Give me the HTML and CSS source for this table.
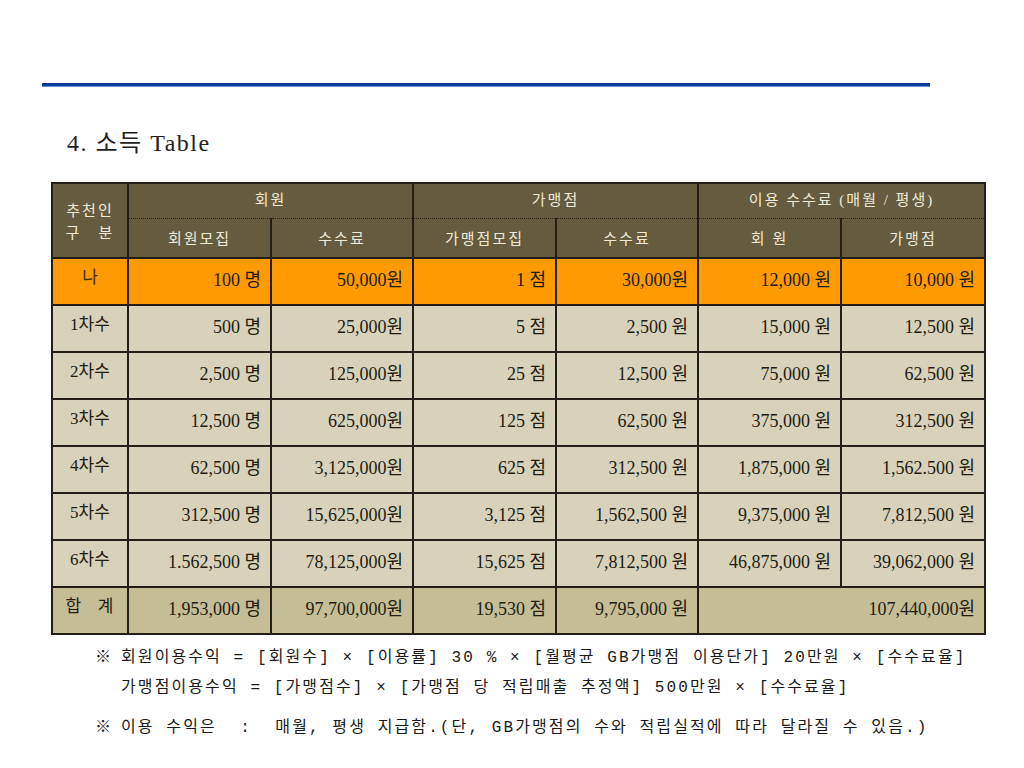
FILE: index.html
```html
<!DOCTYPE html>
<html lang="ko">
<head>
<meta charset="utf-8">
<link rel="stylesheet" href="styles.css">
</head>
<body>
<div class="page">
  <div class="rule"></div>
  <h1 class="title">4. 소득 Table</h1>
  <table class="income">
    <colgroup>
      <col class="c0"><col class="c1"><col class="c2"><col class="c3"><col class="c4"><col class="c5"><col class="c6">
    </colgroup>
    <thead>
      <tr class="h1">
        <th rowspan="2" class="who">추천인<br>구&nbsp;&nbsp;&nbsp;분</th>
        <th colspan="2" class="grp">회원</th>
        <th colspan="2" class="grp">가맹점</th>
        <th colspan="2" class="grp">이용 수수료 (매월 / 평생)</th>
      </tr>
      <tr class="h2">
        <th class="dot">회원모집</th>
        <th>수수료</th>
        <th class="dot">가맹점모집</th>
        <th>수수료</th>
        <th>회 원</th>
        <th>가맹점</th>
      </tr>
    </thead>
    <tbody>
      <tr class="me">
        <td class="lbl">나</td>
        <td class="dot">100 명</td><td>50,000원</td>
        <td class="dot">1 점</td><td>30,000원</td>
        <td>12,000 원</td><td>10,000 원</td>
      </tr>
      <tr>
        <td class="lbl">1차수</td>
        <td class="dot">500 명</td><td>25,000원</td>
        <td class="dot">5 점</td><td>2,500 원</td>
        <td>15,000 원</td><td>12,500 원</td>
      </tr>
      <tr>
        <td class="lbl">2차수</td>
        <td class="dot">2,500 명</td><td>125,000원</td>
        <td class="dot">25 점</td><td>12,500 원</td>
        <td>75,000 원</td><td>62,500 원</td>
      </tr>
      <tr>
        <td class="lbl">3차수</td>
        <td class="dot">12,500 명</td><td>625,000원</td>
        <td class="dot">125 점</td><td>62,500 원</td>
        <td>375,000 원</td><td>312,500 원</td>
      </tr>
      <tr>
        <td class="lbl">4차수</td>
        <td class="dot">62,500 명</td><td>3,125,000원</td>
        <td class="dot">625 점</td><td>312,500 원</td>
        <td>1,875,000 원</td><td>1,562.500 원</td>
      </tr>
      <tr>
        <td class="lbl">5차수</td>
        <td class="dot">312,500 명</td><td>15,625,000원</td>
        <td class="dot">3,125 점</td><td>1,562,500 원</td>
        <td>9,375,000 원</td><td>7,812,500 원</td>
      </tr>
      <tr>
        <td class="lbl">6차수</td>
        <td class="dot">1.562,500 명</td><td>78,125,000원</td>
        <td class="dot">15,625 점</td><td>7,812,500 원</td>
        <td>46,875,000 원</td><td>39,062,000 원</td>
      </tr>
      <tr class="total">
        <td class="lbl">합&nbsp;&nbsp;&nbsp;계</td>
        <td class="dot">1,953,000 명</td><td>97,700,000원</td>
        <td class="dot">19,530 점</td><td>9,795,000 원</td>
        <td colspan="2">107,440,000원</td>
      </tr>
    </tbody>
  </table>
  <div class="notes">
    <p class="note"><span class="mark">※</span>회원이용수익 = [회원수] × [이용률] 30 % × [월평균 GB가맹점 이용단가] 20만원 × [수수료율]</p>
    <p class="note cont">가맹점이용수익 = [가맹점수] × [가맹점 당 적립매출 추정액] 500만원 × [수수료율]</p>
    <p class="note gap"><span class="mark">※</span>이용 수익은&nbsp;&nbsp;:&nbsp;&nbsp;매월, 평생 지급함.(단, GB가맹점의 수와 적립실적에 따라 달라질 수 있음.)</p>
  </div>
</div>
</body>
</html>
```

FILE: styles.css
```css
html, body {
  margin: 0;
  padding: 0;
  background: #ffffff;
}
body {
  font-family: "Liberation Serif", "Noto Sans CJK KR", serif;
  color: #1a1a1a;
}
.page {
  width: 1024px;
  height: 768px;
  padding-top: 83px;
  box-sizing: border-box;
}
.rule {
  margin-left: 42px;
  width: 888px;
  height: 3px;
  background: #0b3a9c;
  border-bottom: 1px solid #6c8fd0;
}
.title {
  margin: 41px 0 0 67px;
  font-weight: normal;
  font-size: 24px;
  line-height: 30px;
  color: #222;
  letter-spacing: 1.5px;
}
.income {
  margin: 24px 0 0 51px;
  border-collapse: collapse;
  table-layout: fixed;
  width: 933px;
  border: 2px solid #231f18;
  font-size: 18px;
}
.c0 { width: 76px; }
.c1 { width: 143px; }
.c2 { width: 142px; }
.c3 { width: 143px; }
.c4 { width: 142px; }
.c5 { width: 143px; }
.c6 { width: 144px; }
.income th {
  background: #655b3f;
  color: #eeead8;
  font-weight: normal;
  font-size: 15px;
  letter-spacing: 2px;
  border-left: 2px solid #231f18;
  border-right: 2px solid #231f18;
  padding: 0;
  line-height: 20px;
}
.income .h1 th { height: 32px; }
.income .h1 th.grp {
  border-bottom: 1px dotted #2a2418;
  vertical-align: middle;
  padding-bottom: 2px;
}
.income .h2 th { height: 36px; padding-top: 2px; }
.income th.who {
  line-height: 22px;
  padding-top: 2px;
}
.income thead { border-bottom: 2px solid #231f18; }
.income td {
  height: 37px;
  border: 2px solid #231f18;
  background: #d8d2bb;
  text-align: right;
  padding: 0 9px 3px 0;
  color: #221c12;
  white-space: nowrap;
  line-height: 20px;
}
.income th.dot { border-right: 1px dotted #2a2418; }
.income td.dot { border-right: 1px dotted #2a2418; }
.income td.lbl {
  text-align: center;
  padding: 0 0 8px 0;
  font-size: 17px;
}
.income tr.me td { background: #ff9a00; }
.income tr.me td.lbl { color: #4a2a10; }
.income tr.total td { background: #c5bd96; }
.income tr.total td.lbl { letter-spacing: 1px; }
.notes {
  margin: 8px 0 0 95px;
  font-family: "Liberation Mono", "Noto Sans CJK KR", monospace;
  font-size: 16px;
  letter-spacing: 2.1px;
  color: #1a1a1a;
}
.note {
  margin: 0;
  line-height: 30px;
  white-space: nowrap;
}
.note .mark {
  display: inline-block;
  width: 26px;
}
.note.cont { padding-left: 26px; }
.note.gap { margin-top: 10px; }
```
